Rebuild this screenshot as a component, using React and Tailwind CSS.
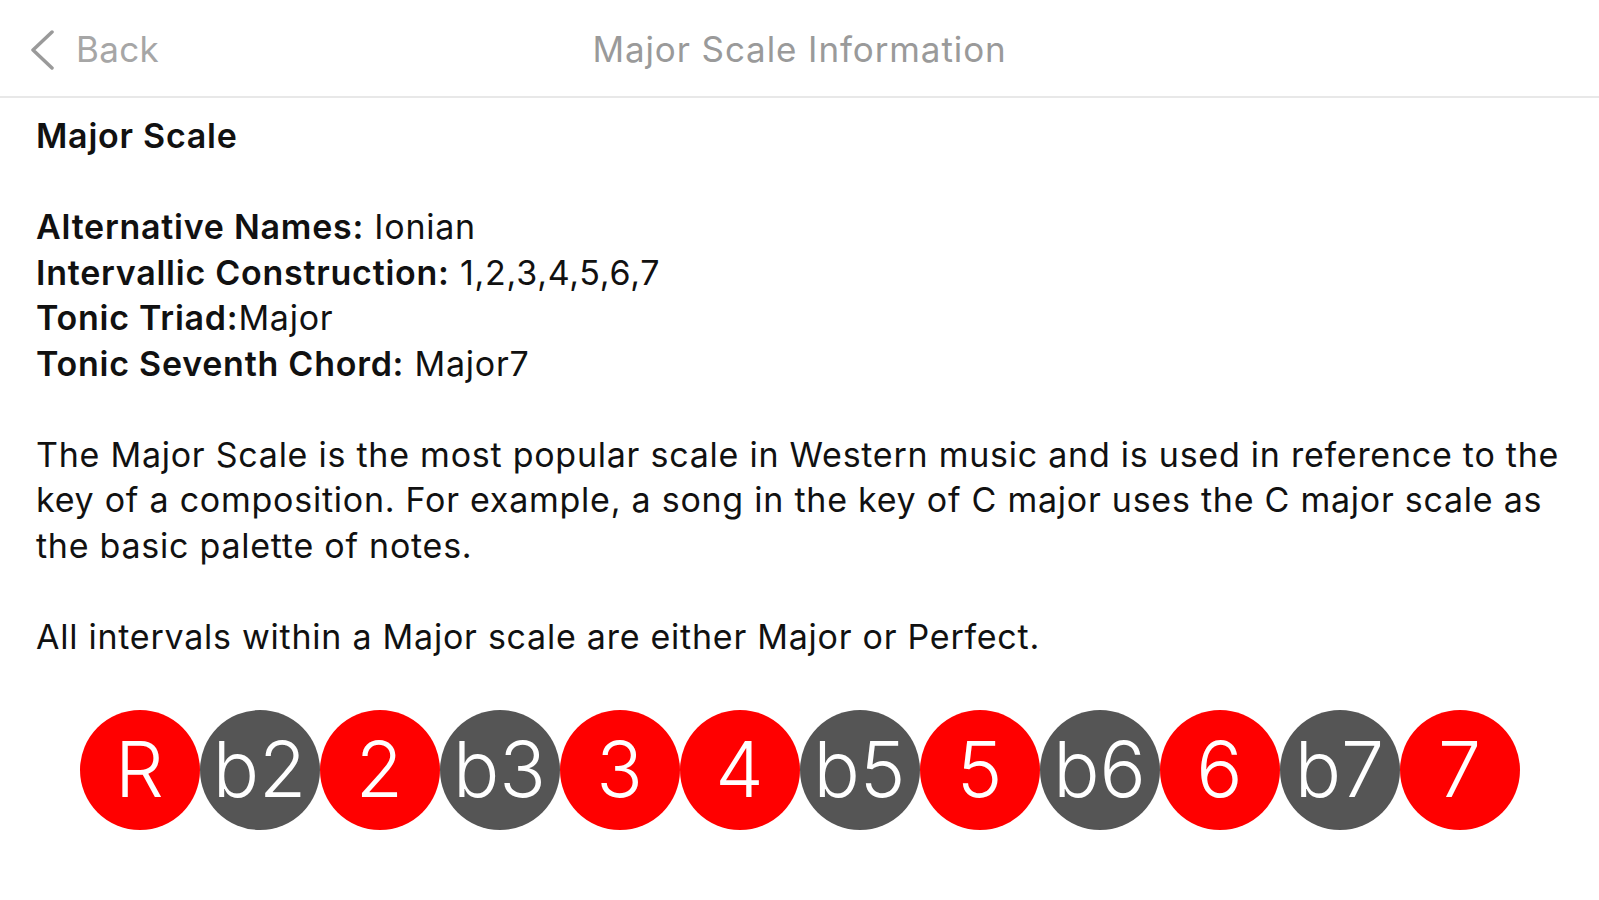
import React from "react";

const notes = [
  { label: "R", on: true },
  { label: "b2", on: false },
  { label: "2", on: true },
  { label: "b3", on: false },
  { label: "3", on: true },
  { label: "4", on: true },
  { label: "b5", on: false },
  { label: "5", on: true },
  { label: "b6", on: false },
  { label: "6", on: true },
  { label: "b7", on: false },
  { label: "7", on: true },
];

function Header() {
  return (
    <div className="relative flex h-[98px] items-center justify-center border-b-2 border-[#e8e8e8] bg-white pt-[3px]">
      <div className="absolute left-[30px] top-0 flex h-full items-center gap-[20px] pt-[3px]">
        <svg width="26" height="40" viewBox="0 0 26 40" fill="none">
          <polyline points="22,2 3,20 22,38" stroke="#9a9a9a" strokeWidth="3.5" strokeLinecap="round" strokeLinejoin="round" />
        </svg>
        <span className="text-[35px] tracking-[0.3px] text-[#a6a6a6]">Back</span>
      </div>
      <h1 className="text-[35px] tracking-[0.9px] text-[#9a9a9a]">Major Scale Information</h1>
    </div>
  );
}

export default function App() {
  return (
    <div className="min-h-screen bg-white font-['Inter',sans-serif]">
      <Header />
      <div className="px-[36px] pt-[15px] text-[34px] leading-[45.5px] tracking-[0.75px] text-[#111]">
        <p className="font-semibold">Major Scale</p>
        <p>&nbsp;</p>
        <p>
          <span className="font-semibold">Alternative Names:</span> Ionian
        </p>
        <p>
          <span className="font-semibold">Intervallic Construction:</span> 1,2,3,4,5,6,7
        </p>
        <p>
          <span className="font-semibold">Tonic Triad:</span>Major
        </p>
        <p>
          <span className="font-semibold">Tonic Seventh Chord:</span> Major7
        </p>
        <p>&nbsp;</p>
        <p className="whitespace-nowrap">
          The Major Scale is the most popular scale in Western music and is used in reference to the
          <br />
          key of a composition. For example, a song in the key of C major uses the C major scale as
          <br />
          the basic palette of notes.
        </p>
        <p>&nbsp;</p>
        <p>All intervals within a Major scale are either Major or Perfect.</p>
      </div>
      <div className="mt-[51px] flex justify-center">
        {notes.map((n) => (
          <div
            key={n.label}
            className={`flex h-[120px] w-[120px] items-center justify-center rounded-full text-[77px] font-light text-white ${
              n.on ? "bg-[#ff0000]" : "bg-[#555555]"
            }`}
          >
            {n.label}
          </div>
        ))}
      </div>
    </div>
  );
}
